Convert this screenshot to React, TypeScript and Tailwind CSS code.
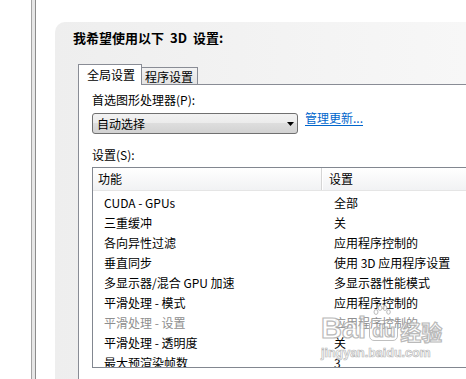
import React from 'react';

type Row = { name: string; value: string; disabled?: boolean };

const rows: Row[] = [
  { name: 'CUDA - GPUs', value: '全部' },
  { name: '三重缓冲', value: '关' },
  { name: '各向异性过滤', value: '应用程序控制的' },
  { name: '垂直同步', value: '使用 3D 应用程序设置' },
  { name: '多显示器/混合 GPU 加速', value: '多显示器性能模式' },
  { name: '平滑处理 - 模式', value: '应用程序控制的' },
  { name: '平滑处理 - 设置', value: '应用程序控制的', disabled: true },
  { name: '平滑处理 - 透明度', value: '关' },
  { name: '最大预渲染帧数', value: '3' },
];

const ArrowDown: React.FC = () => (
  <svg width="7" height="4" viewBox="0 0 7 4" className="shrink-0">
    <path d="M0 0h7L3.5 4z" fill="#000" />
  </svg>
);

// baidu jingyan watermark laid over the list
const Watermark: React.FC = () => (
  <div className="absolute left-[321px] top-[302px] pointer-events-none select-none flex flex-col items-start opacity-80">
    <div className="flex items-end h-[40px] font-['Liberation_Sans',sans-serif] font-bold text-white [-webkit-text-stroke:1.2px_#a9a9a9]">
      <span className="text-[29px] leading-[27px]">Bai</span>
      <span className="relative ml-[3px] mb-[1px] rounded-[5px] border-[1.5px] border-[#b0b0b0] px-[2px] text-[19px] leading-[19px]">
        du
        <svg width="18" height="13" viewBox="0 0 18 13" className="absolute left-[3px] top-[-16px]">
          <ellipse cx="3" cy="7" rx="2" ry="2.4" fill="#fff" stroke="#aaa" />
          <ellipse cx="7" cy="3" rx="2" ry="2.4" fill="#fff" stroke="#aaa" />
          <ellipse cx="12" cy="3" rx="2" ry="2.4" fill="#fff" stroke="#aaa" />
          <ellipse cx="15.5" cy="7" rx="1.8" ry="2.2" fill="#fff" stroke="#aaa" />
        </svg>
      </span>
      <span className="ml-[2px] font-['Noto_Sans_CJK_SC',sans-serif] text-[21px] leading-[22px]">经验</span>
    </div>
    <div className="mt-[5px] font-['Liberation_Sans',sans-serif] font-bold text-[12.5px] leading-[12px] text-white [-webkit-text-stroke:0.7px_#a9a9a9]">
      jingyan.baidu.com
    </div>
  </div>
);

export default function App() {
  return (
    <div className="relative w-[466px] h-[379px] overflow-hidden bg-white flex font-['Noto_Sans_CJK_SC','Liberation_Sans',sans-serif] text-[12px] text-black">
      <div className="w-[31px] shrink-0" />
      <div className="w-[5px] shrink-0 border-l border-r border-l-[#a3a3a3] border-r-[#8c8c8c] bg-[#e6e6e6]" />
      <div className="w-[19px] shrink-0" />

      <div className="flex-1 mt-[22px] rounded-tl-[10px] bg-[linear-gradient(to_right,#eeeeee,#f7f7f7)] flex flex-col min-w-0">
        <div className="pl-[18px] pt-[8px] h-[42px] font-bold text-[13px] leading-[16px] whitespace-nowrap">
          我希望使用以下<span className="mx-[6px]">3D</span>设置:
        </div>

        <div className="ml-[23px] flex flex-col flex-1 min-w-0">
          <div className="flex items-end h-[20px] relative z-10">
            <div className="h-[21px] -mb-px w-[64px] bg-white border border-b-0 border-[#898c95] pl-[8px] leading-[20px]">
              全局设置
            </div>
            <div className="h-[17px] w-[56px] border border-l-0 border-b-0 border-[#898c95] bg-[linear-gradient(to_bottom,#f2f2f2,#e3e3e3)] pl-[3px] leading-[17px]">
              程序设置
            </div>
          </div>

          <div className="flex-1 bg-white border-t border-l border-[#898c95] pl-[13px] pt-[7px] min-w-0">
            <div className="leading-[16px]">首选图形处理器(P):</div>

            <div className="mt-[5px] flex items-start">
              <div className="w-[206px] h-[21px] rounded-[3px] border border-[#707070] bg-[linear-gradient(to_bottom,#f2f2f2_0%,#ebebeb_50%,#dddddd_50%,#d2d2d2_100%)] flex items-center justify-between pl-[4px] pr-[3px]">
                <span className="leading-[16px]">自动选择</span>
                <ArrowDown />
              </div>
              <a className="ml-[7px] -mt-[3px] leading-[16px] text-[#0066cc] underline underline-offset-2 whitespace-nowrap cursor-pointer">
                管理更新...
              </a>
            </div>

            <div className="mt-[13px] leading-[16px]">设置(S):</div>

            <div className="mt-[4px] h-[201px] border border-r-0 border-[#828790] overflow-hidden">
              <div className="flex h-[23px] border-b border-[#e5e5e5] bg-[linear-gradient(to_bottom,#ffffff,#f1f2f4)]">
                <div className="w-[229px] shrink-0 pl-[5px] leading-[22px] border-r border-[#d5d5d5]">功能</div>
                <div className="pl-[6px] leading-[22px] border-l border-white">设置</div>
              </div>
              <div className="pt-[2px]">
                {rows.map((row, i) => (
                  <div
                    key={i}
                    className={`flex h-[20px] leading-[20px] whitespace-nowrap ${row.disabled ? 'text-[#8e8e8e]' : ''}`}
                  >
                    <div className="w-[241px] shrink-0 pl-[11px]">{row.name}</div>
                    <div>{row.value}</div>
                  </div>
                ))}
              </div>
            </div>
          </div>
        </div>
      </div>

      <Watermark />
    </div>
  );
}
